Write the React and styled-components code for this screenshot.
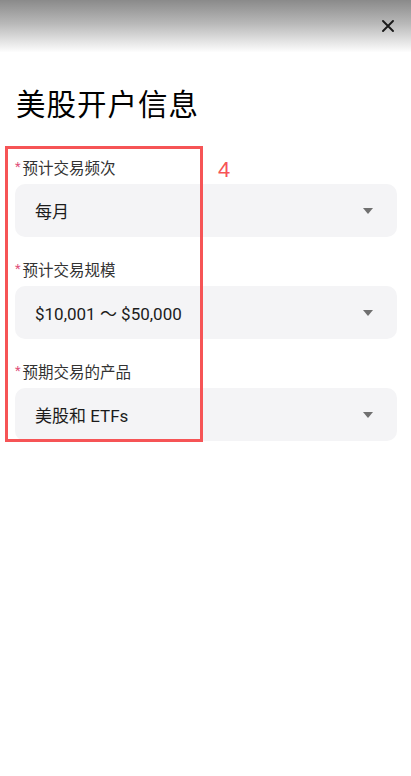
import React from "react";
import styled, { createGlobalStyle } from "styled-components";

const Global = createGlobalStyle`
  html, body {
    margin: 0;
    padding: 0;
    background: #fff;
    font-family: "Roboto", "Noto Sans CJK SC", sans-serif;
  }
`;

const Page = styled.div`
  width: 411px;
  min-height: 776px;
  background: #fff;
  display: flex;
  flex-direction: column;
`;

const Header = styled.div`
  height: 52px;
  flex-shrink: 0;
  background: linear-gradient(to bottom, #8a8a8a 0%, #b8b8b8 45%, #fdfdfd 100%);
  display: flex;
  justify-content: flex-end;
  align-items: center;
  padding: 0 17px 0 0;
  box-sizing: border-box;
`;

const CloseBtn = styled.button`
  border: 0;
  background: none;
  padding: 0;
  width: 12px;
  height: 12px;
  display: flex;
  cursor: pointer;
`;

const Title = styled.h1`
  margin: 33px 0 0 16px;
  font-size: 29.5px;
  line-height: 40px;
  font-weight: 400;
  color: #000;
  letter-spacing: 1px;
`;

const Form = styled.div`
  position: relative;
  margin-top: 33px;
  padding: 0 14px 0 15px;
  display: flex;
  flex-direction: column;
  gap: 23px;
`;

const Field = styled.div`
  display: flex;
  flex-direction: column;
  gap: 4px;
`;

const Label = styled.div`
  font-size: 15.5px;
  line-height: 22px;
  color: #333;
  display: flex;
  align-items: center;
`;

const Star = styled.span`
  color: #e0507a;
  font-size: 13px;
  margin-right: 2px;
  position: relative;
  top: -2px;
`;

const Select = styled.div`
  height: 53px;
  background: #f4f4f6;
  border-radius: 10px;
  display: flex;
  align-items: center;
  justify-content: space-between;
  padding: 0 24px 0 20px;
  font-size: 17px;
  color: #1c1c1c;
`;

const Caret = styled.span`
  width: 0;
  height: 0;
  border-left: 5px solid transparent;
  border-right: 5px solid transparent;
  border-top: 6px solid #707070;
`;

const Highlight = styled.div`
  position: absolute;
  top: -12px;
  left: 5px;
  width: 198px;
  height: 296px;
  border: 3px solid #f65456;
  box-sizing: border-box;
  pointer-events: none;
`;

const Marker = styled.div`
  position: absolute;
  top: 1px;
  left: 218px;
  font-size: 22px;
  line-height: 22px;
  color: #f65456;
  font-family: "Liberation Sans", sans-serif;
`;

const fields = [
  { label: "预计交易频次", value: "每月" },
  { label: "预计交易规模", value: "$10,001 ～ $50,000" },
  { label: "预期交易的产品", value: "美股和 ETFs" },
];

export default function App() {
  return (
    <Page>
      <Global />
      <Header>
        <CloseBtn aria-label="关闭">
          <svg width="12" height="12" viewBox="0 0 12 12">
            <path d="M1 1L11 11M11 1L1 11" stroke="#1a1a1a" strokeWidth="1.9" strokeLinecap="round" />
          </svg>
        </CloseBtn>
      </Header>
      <Title>美股开户信息</Title>
      <Form>
        {fields.map((f) => (
          <Field key={f.label}>
            <Label>
              <Star>*</Star>
              {f.label}
            </Label>
            <Select>
              <span>{f.value}</span>
              <Caret />
            </Select>
          </Field>
        ))}
        <Highlight />
        <Marker>4</Marker>
      </Form>
    </Page>
  );
}
